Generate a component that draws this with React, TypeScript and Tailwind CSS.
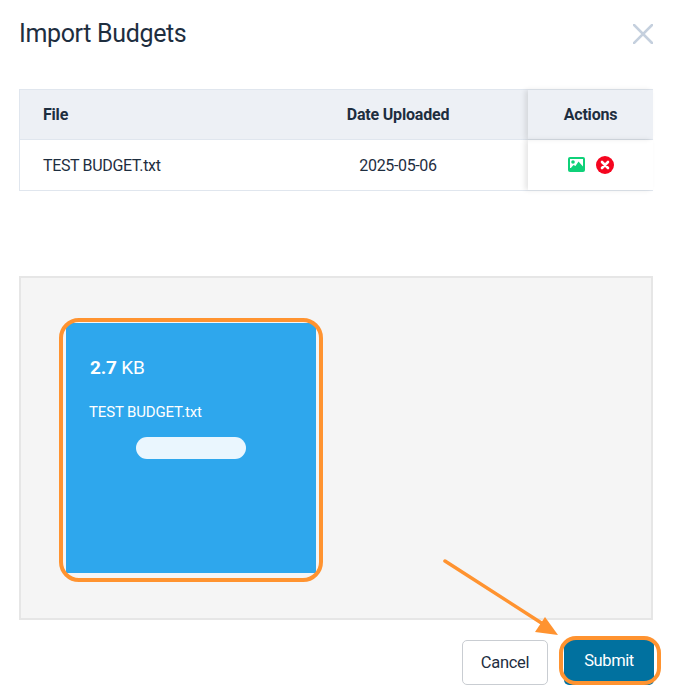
// Screenshot annotations (orange outlines + arrow) sit over the dialog.
function Annotations() {
  return (
    <>
      <div className="absolute left-[59px] top-[318px] w-[264px] h-[264px] rounded-[20px] border-[4px] border-[#ff9330]" />
      <div className="absolute left-[559px] top-[636px] w-[102px] h-[49px] rounded-[17px] border-[4px] border-[#ff9330]" />
      <svg className="absolute left-[440px] top-[556px]" width="125" height="85" viewBox="0 0 125 85">
        <line x1="5" y1="5" x2="103" y2="68" stroke="#ff9330" strokeWidth="3.5" strokeLinecap="round" />
        <polygon points="105,61 118,79 95,76" fill="#ff9330" />
      </svg>
    </>
  );
}

function ImageIcon() {
  return (
    <svg width="17" height="15" viewBox="0 0 17 15">
      <rect width="17" height="15" rx="2" fill="#0fd179" />
      <rect x="2" y="2" width="13" height="9" fill="#fff" />
      <circle cx="5" cy="5" r="1.8" fill="#0fd179" />
      <path d="M2 12 L5.5 8 L7.5 9 L10.5 4.5 L15 9.5 V12 Z" fill="#0fd179" />
    </svg>
  );
}

function RemoveIcon() {
  return (
    <svg width="18" height="18" viewBox="0 0 18 18">
      <circle cx="9" cy="9" r="9" fill="#f5051f" />
      <path d="M6 6 L12 12 M12 6 L6 12" stroke="#fff" strokeWidth="2.6" strokeLinecap="round" />
    </svg>
  );
}

export default function App() {
  return (
    <div className="relative w-[673px] h-[694px] bg-white overflow-hidden font-['Roboto',sans-serif] text-[#1e2e3f]">
      <div className="flex items-start justify-between pl-[19px] pr-[20px] pt-[18px] h-[89px]">
        <h1 className="text-[25px] leading-[32px] tracking-[-0.35px] font-normal">Import Budgets</h1>
        <svg className="mt-[6px]" width="20" height="20" viewBox="0 0 20 20">
          <path d="M1 1 L19 19 M19 1 L1 19" stroke="#c5d0de" strokeWidth="2.6" strokeLinecap="square" />
        </svg>
      </div>

      {/* Files table */}
      <div className="ml-[19px] w-[634px] border-t border-b border-l border-[#e0e6ee] text-[16px] tracking-[-0.35px]">
        <div className="flex h-[50px] items-center bg-[#edf0f5] border-b border-[#e0e6ee] font-bold tracking-[-0.2px]">
          <div className="w-[248px] pl-[23px]">File</div>
          <div className="w-[260px] text-center">Date Uploaded</div>
          <div className="flex-1 h-full flex items-center justify-center shadow-[-3px_0_5px_rgba(0,0,0,0.1)]">Actions</div>
        </div>
        <div className="flex h-[50px] items-center bg-white">
          <div className="w-[248px] pl-[23px] pt-[2px]">TEST BUDGET.txt</div>
          <div className="w-[260px] text-center pt-[2px]">2025-05-06</div>
          <div className="flex-1 h-full flex items-center justify-center gap-[11px] pb-[1px] shadow-[-3px_0_5px_rgba(0,0,0,0.1)]">
            <ImageIcon />
            <RemoveIcon />
          </div>
        </div>
      </div>

      {/* Drop zone */}
      <div className="ml-[19px] mt-[85px] w-[634px] h-[344px] border-2 border-[#e6e6e6] bg-[#f5f5f5] pl-[45px] pt-[45px]">
        <div className="w-[250px] h-[250px] bg-[#2ea7ed] text-white">
          <div className="pl-[24px] pt-[33px] text-[19px] leading-[24px] tracking-[-0.2px]">
            <span className="font-bold">2.7</span> KB
          </div>
          <div className="pl-[23px] mt-[22px] text-[15px] leading-[20px] tracking-[-0.15px]">TEST BUDGET.txt</div>
          <div className="ml-[70px] mt-[15px] w-[110px] h-[22px] rounded-full bg-[#eaf6fe]" />
        </div>
      </div>

      {/* Footer buttons */}
      <div className="flex justify-end items-start gap-[16px] mt-[20px] pr-[19px]">
        <button className="w-[86px] h-[45px] pt-[1px] bg-white border border-[#c9cdd2] rounded-[5px] text-[16.5px] tracking-[-0.3px]">Cancel</button>
        <button className="w-[90px] h-[45px] pb-[2px] bg-[#01719f] text-white rounded-[5px] text-[16.5px] tracking-[-0.4px]">Submit</button>
      </div>

      <Annotations />
    </div>
  );
}
